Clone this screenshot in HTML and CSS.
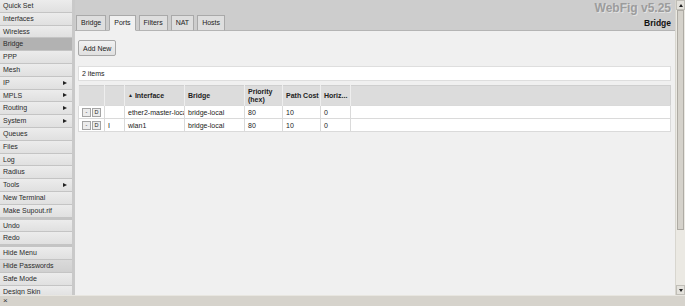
FILE: index.html
```html
<!DOCTYPE html>
<html lang="en">
<head>
    <meta charset="UTF-8">
    <title>WebFig - Bridge</title>
    <link rel="stylesheet" href="styles.css">
</head>
<body>
    <div class="main">
        <div class="menu">
            <div class="group">
                <div class="item">Quick Set</div>
                <div class="item">Interfaces</div>
                <div class="item">Wireless</div>
                <div class="item selected">Bridge</div>
                <div class="item">PPP</div>
                <div class="item">Mesh</div>
                <div class="item sub">IP</div>
                <div class="item sub">MPLS</div>
                <div class="item sub">Routing</div>
                <div class="item sub">System</div>
                <div class="item">Queues</div>
                <div class="item">Files</div>
                <div class="item">Log</div>
                <div class="item">Radius</div>
                <div class="item sub">Tools</div>
                <div class="item">New Terminal</div>
                <div class="item">Make Supout.rif</div>
            </div>
            <div class="group">
                <div class="item">Undo</div>
                <div class="item">Redo</div>
            </div>
            <div class="group">
                <div class="item">Hide Menu</div>
                <div class="item hover">Hide Passwords</div>
                <div class="item">Safe Mode</div>
                <div class="item">Design Skin</div>
            </div>
        </div>

        <div class="content">
            <div class="top">
                <div class="tabs">
                    <div class="tab">Bridge</div>
                    <div class="tab active">Ports</div>
                    <div class="tab">Filters</div>
                    <div class="tab">NAT</div>
                    <div class="tab">Hosts</div>
                </div>
                <div class="titles">
                    <div class="brand">WebFig v5.25</div>
                    <div class="page-title">Bridge</div>
                </div>
            </div>
            <div class="panel">
                <button class="add-new">Add New</button>
                <div class="count">2 items</div>
                <table class="list">
                    <colgroup>
                        <col class="c-btn">
                        <col class="c-flag">
                        <col class="c-if">
                        <col class="c-br">
                        <col class="c-pri">
                        <col class="c-cost">
                        <col class="c-hor">
                        <col>
                    </colgroup>
                    <thead>
                        <tr>
                            <th></th>
                            <th></th>
                            <th><span class="sort">&#9650;</span> Interface</th>
                            <th>Bridge</th>
                            <th>Priority<br>(hex)</th>
                            <th>Path Cost</th>
                            <th>Horiz...</th>
                            <th></th>
                        </tr>
                    </thead>
                    <tbody>
                        <tr>
                            <td class="btns"><span class="mini">-</span><span class="mini">D</span></td>
                            <td></td>
                            <td>ether2-master-local</td>
                            <td>bridge-local</td>
                            <td>80</td>
                            <td>10</td>
                            <td>0</td>
                            <td></td>
                        </tr>
                        <tr>
                            <td class="btns"><span class="mini">-</span><span class="mini">D</span></td>
                            <td>I</td>
                            <td>wlan1</td>
                            <td>bridge-local</td>
                            <td>80</td>
                            <td>10</td>
                            <td>0</td>
                            <td></td>
                        </tr>
                    </tbody>
                </table>
            </div>
        </div>

        <div class="scrollbar">
            <div class="arrow up"></div>
            <div class="track"><div class="thumb"></div></div>
            <div class="arrow down"></div>
        </div>
    </div>
    <div class="statusbar">&times;</div>
</body>
</html>
```

FILE: styles.css
```css
body {
    margin: 0;
    padding: 0;
    width: 685px;
    height: 306px;
    overflow: hidden;
    font-family: 'Liberation Sans', Arial, sans-serif;
    font-size: 7px;
    color: #222;
    display: flex;
    flex-direction: column;
}

.main {
    display: flex;
    height: 296px;
    overflow: hidden;
}

/* left menu */
.menu {
    width: 72px;
    flex: none;
    background: #c4c4c4;
    border-right: 3px solid #c9c9c9;
    display: flex;
    flex-direction: column;
    gap: 2px;
}

.group {
    display: flex;
    flex-direction: column;
}

.item {
    height: 11.8px;
    line-height: 11.8px;
    margin-bottom: 1px;
    padding-left: 3px;
    padding-right: 5px;
    background: linear-gradient(#ececec, #e0e0e0);
    color: #2a2a2a;
    white-space: nowrap;
    display: flex;
    justify-content: space-between;
    align-items: center;
}

.item.selected {
    background: #b2b2b2;
}

.item.hover {
    background: linear-gradient(#dadada, #d0d0d0);
}

.item.sub::after {
    content: "";
    border-left: 4px solid #222;
    border-top: 2.5px solid transparent;
    border-bottom: 2.5px solid transparent;
}

/* content */
.content {
    flex: 1;
    display: flex;
    flex-direction: column;
    background: #f0f0f0;
}

.top {
    height: 30px;
    flex: none;
    background: #cdcdcd;
    border-bottom: 1px solid #b4b4b4;
    display: flex;
    justify-content: space-between;
    align-items: flex-end;
    padding-left: 1px;
}

.tabs {
    display: flex;
    gap: 3px;
    margin-bottom: -1px;
}

.tab {
    height: 14px;
    line-height: 14px;
    padding: 0 4px;
    background: #dedede;
    border: 1px solid #a9a9a9;
    border-bottom-color: #b4b4b4;
    color: #222;
}

.tab.active {
    background: #f0f0f0;
    border-bottom-color: #f0f0f0;
}

.titles {
    display: flex;
    flex-direction: column;
    align-items: flex-end;
    padding-right: 4px;
    padding-bottom: 2px;
}

.brand {
    font-size: 12px;
    font-weight: bold;
    color: #9c9c9c;
    text-shadow: 1px 1px 0 #e2e2e2;
    margin-bottom: 3px;
}

.page-title {
    font-size: 8.5px;
    font-weight: bold;
    color: #111;
}

.panel {
    flex: 1;
    padding: 9px 4px 0 3px;
    display: flex;
    flex-direction: column;
    align-items: flex-start;
}

.add-new {
    font-family: 'Liberation Sans', Arial, sans-serif;
    font-size: 7px;
    color: #222;
    height: 16px;
    padding: 0 4px;
    background: linear-gradient(#f2f2f2, #e0e0e0);
    border: 1px solid #a8a8a8;
    border-radius: 2px;
}

.count {
    align-self: stretch;
    margin-top: 10px;
    height: 13px;
    line-height: 13px;
    padding-left: 3px;
    background: #fff;
    border: 1px solid #dedede;
}

.list {
    width: 100%;
    margin-top: 4px;
    border-collapse: collapse;
    background: #fff;
    border: 1px solid #cfcfcf;
    table-layout: fixed;
}

.c-btn { width: 26px; }
.c-flag { width: 20px; }
.c-if { width: 60px; }
.c-br { width: 60px; }
.c-pri { width: 38px; }
.c-cost { width: 38px; }
.c-hor { width: 30px; }

.list th {
    height: 19px;
    background: #dcdcdc;
    border-left: 1px solid #eeeeee;
    text-align: left;
    font-weight: bold;
    padding: 0 3px;
    line-height: 8px;
    white-space: nowrap;
    overflow: hidden;
    color: #222;
}

.list td {
    height: 12px;
    padding: 0 3px;
    border: 1px solid #dadada;
    white-space: nowrap;
    overflow: hidden;
    color: #222;
}

.sort {
    font-size: 5px;
    vertical-align: 1px;
}

.list td.btns {
    padding: 0 3px;
}

.mini {
    display: inline-block;
    width: 7px;
    height: 7px;
    line-height: 7px;
    margin-right: 1px;
    font-size: 5.5px;
    text-align: center;
    background: #ececec;
    border: 1px solid #a4a4a4;
    vertical-align: middle;
}

/* right scrollbar */
.scrollbar {
    width: 9px;
    flex: none;
    background: #ebe9e3;
    border-left: 1px solid #d8d6cf;
    display: flex;
    flex-direction: column;
}

.arrow {
    height: 8px;
    background: #e4e2dc;
    border: 1px solid #c0beb7;
    display: flex;
    justify-content: center;
    align-items: center;
}

.arrow.up::after {
    content: "";
    border-bottom: 3px solid #222;
    border-left: 2px solid transparent;
    border-right: 2px solid transparent;
}

.arrow.down::after {
    content: "";
    border-top: 3px solid #222;
    border-left: 2px solid transparent;
    border-right: 2px solid transparent;
}

.track {
    flex: 1;
    padding: 0 1px;
}

.thumb {
    height: 218px;
    background: #d5d2cb;
    border: 1px solid #aeaba4;
}

.statusbar {
    height: 10px;
    line-height: 10px;
    padding-left: 3px;
    background: #d6d3cc;
    border-top: 1px solid #e8e6e0;
    font-size: 8px;
    color: #333;
}
```
